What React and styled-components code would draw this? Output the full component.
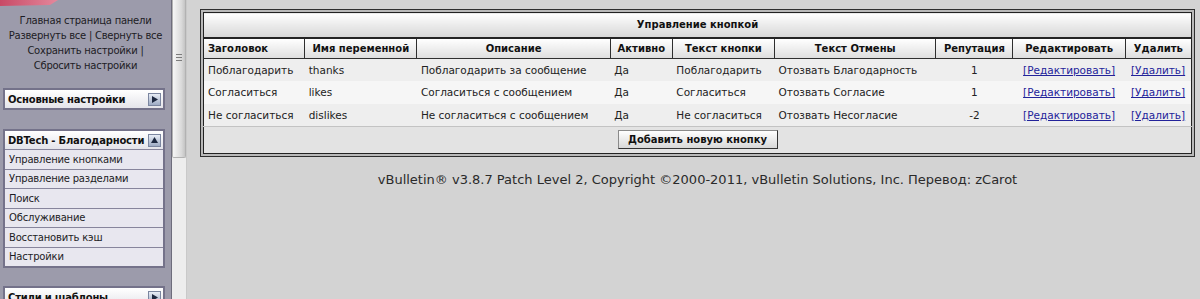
import React from 'react';
import styled, { createGlobalStyle } from 'styled-components';

const Global = createGlobalStyle`
  html, body { margin: 0; padding: 0; background: #d3d3d3; overflow: hidden; }
  body { font-family: "DejaVu Sans", Verdana, sans-serif; color: #1e1e1e; }
  * { box-sizing: border-box; }
`;

const Page = styled.div`
  display: flex;
  height: 299px;
  width: 1200px;
`;

const Nav = styled.nav`
  width: 172px;
  flex: none;
  background: #9c9bab;
  border-right: 1px solid #6e6d7c;
`;

const Logo = styled.div`
  height: 13px;
  svg { display: block; }
`;

const TopLinks = styled.div`
  text-align: center;
  font-size: 10px;
  letter-spacing: -0.25px;
  line-height: 15px;
  color: #1c1c24;
  margin-bottom: 15px;
`;

const Group = styled.div`
  margin: 0 6px ${p => p.$gap || 19}px 3px;
  border: 2px solid #74728a;
  background: #e8e7ef;
`;

const GroupHeader = styled.div`
  height: 18px;
  display: flex;
  align-items: center;
  justify-content: space-between;
  padding: 0 2px 0 3px;
  background: linear-gradient(#ffffff, #e4e4ea);
  font-weight: bold;
  font-size: 10px;
  letter-spacing: -0.2px;
  color: #111;
`;

const Toggle = styled.span`
  width: 13px;
  height: 13px;
  border: 1px solid #7b86a0;
  background: linear-gradient(#e8edf6, #9eabc4);
  display: flex;
  align-items: center;
  justify-content: center;
  svg { display: block; }
`;

const Item = styled.div`
  height: 19.5px;
  border-top: 1px solid #87859c;
  padding-left: 4px;
  font-size: 10px;
  letter-spacing: -0.2px;
  display: flex;
  align-items: center;
  color: #1c1c24;
`;

const Scrollbar = styled.div`
  width: 15px;
  flex: none;
  background: #ededed;
  border-right: 1px solid #c9c9c9;
`;

const Thumb = styled.div`
  height: 158px;
  background: linear-gradient(90deg, #f6f6f6, #dadada 70%, #c4c4c4);
  border: 1px solid #b2b2b2;
  border-top: none;
  border-radius: 0 0 2px 2px;
  display: flex;
  flex-direction: column;
  align-items: center;
  padding-top: 54px;
  gap: 2px;
`;

const Grip = styled.span`
  width: 6px;
  height: 1px;
  background: #7c7c7c;
`;

const Main = styled.main`
  flex: 1;
  padding: 9px 5px 0 13px;
  background: #d3d3d3;
`;

const Frame = styled.div`
  border: 1px solid #2e2e2e;
  padding: 2px;
  background: #b9b9b9;
`;

const Table = styled.table`
  width: 100%;
  border-collapse: collapse;
  table-layout: fixed;
  border: 1px solid #222;
  font-size: 10.5px;
`;

const TitleCell = styled.td`
  height: 25px;
  text-align: center;
  font-weight: bold;
  font-size: 10px;
  background: linear-gradient(#ffffff, #d6d6d6);
  border-bottom: 2px solid #232323;
  color: #111;
`;

const Th = styled.th`
  height: 21px;
  font-size: 10px;
  font-weight: bold;
  text-align: ${p => p.$left ? 'left' : 'center'};
  padding: 0 4px;
  background: linear-gradient(#ffffff, #dedede);
  border-right: 1px solid #2f2f2f;
  border-bottom: 1px solid #2f2f2f;
  color: #111;
  white-space: nowrap;
  &:last-child { border-right: none; }
`;

const Row = styled.tr`
  background: ${p => p.$alt ? '#f6f6f6' : '#eeeeee'};
`;

const Td = styled.td`
  height: 22.5px;
  padding: 0 4px;
  white-space: nowrap;
  text-align: ${p => p.$center ? 'center' : 'left'};
  color: #222;
`;

const Link = styled.a`
  color: #23239a;
  text-decoration: underline;
`;

const FootCell = styled.td`
  height: 27px;
  text-align: center;
  background: #e3e3e3;
  border-top: 1px solid #c3c3c3;
`;

const Button = styled.button`
  font-family: "DejaVu Sans", Verdana, sans-serif;
  font-weight: bold;
  font-size: 10px;
  width: 160px;
  height: 19px;
  padding: 0;
  color: #111;
  background: linear-gradient(#ffffff, #d8d8d8);
  border: 1px solid #8a8a8a;
  border-right-color: #333;
  border-bottom-color: #333;
`;

const Footer = styled.div`
  text-align: center;
  font-size: 13px;
  color: #2a2a2a;
  margin-top: 15px;
`;

const rows = [
  ['Поблагодарить', 'thanks', 'Поблагодарить за сообщение', 'Да', 'Поблагодарить', 'Отозвать Благодарность', '1'],
  ['Согласиться', 'likes', 'Согласиться с сообщением', 'Да', 'Согласиться', 'Отозвать Согласие', '1'],
  ['Не согласиться', 'dislikes', 'Не согласиться с сообщением', 'Да', 'Не согласиться', 'Отозвать Несогласие', '-2'],
];

const widths = [101, 112, 193, 62, 102, 161, 77, 112, 66];

const Arrow = ({ up }) => (
  <Toggle>
    <svg width="7" height="7" viewBox="0 0 7 7">
      {up ? <polygon points="0,6 7,6 3.5,0" fill="#1d2840" /> : <polygon points="1,0 1,7 7,3.5" fill="#1d2840" />}
    </svg>
  </Toggle>
);

export default function App() {
  return (
    <Page>
      <Global />
      <Nav>
        <Logo>
          <svg width="172" height="13" viewBox="0 0 172 13">
            <defs>
              <linearGradient id="lg" x1="0" x2="1">
                <stop offset="0" stopColor="#c84a66" />
                <stop offset="1" stopColor="#e4889c" />
              </linearGradient>
            </defs>
            <polygon points="0,0 58,0 50,5 0,6" fill="url(#lg)" />
          </svg>
        </Logo>
        <TopLinks>
          <div>Главная страница панели</div>
          <div>Развернуть все | Свернуть все</div>
          <div>Сохранить настройки |</div>
          <div>Сбросить настройки</div>
        </TopLinks>
        <Group>
          <GroupHeader>Основные настройки <Arrow /></GroupHeader>
        </Group>
        <Group $gap={18}>
          <GroupHeader>DBTech - Благодарности <Arrow up /></GroupHeader>
          <Item>Управление кнопками</Item>
          <Item>Управление разделами</Item>
          <Item>Поиск</Item>
          <Item>Обслуживание</Item>
          <Item>Восстановить кэш</Item>
          <Item>Настройки</Item>
        </Group>
        <Group>
          <GroupHeader>Стили и шаблоны <Arrow /></GroupHeader>
        </Group>
      </Nav>
      <Scrollbar>
        <Thumb><Grip /><Grip /><Grip /></Thumb>
      </Scrollbar>
      <Main>
        <Frame>
          <Table>
            <colgroup>
              {widths.map((w, i) => <col key={i} style={{ width: w }} />)}
            </colgroup>
            <tbody>
              <tr><TitleCell colSpan={9}>Управление кнопкой</TitleCell></tr>
              <tr>
                <Th $left>Заголовок</Th>
                <Th>Имя переменной</Th>
                <Th>Описание</Th>
                <Th>Активно</Th>
                <Th>Текст кнопки</Th>
                <Th>Текст Отмены</Th>
                <Th>Репутация</Th>
                <Th>Редактировать</Th>
                <Th>Удалить</Th>
              </tr>
              {rows.map((r, i) => (
                <Row key={i} $alt={i === 1}>
                  <Td>{r[0]}</Td>
                  <Td>{r[1]}</Td>
                  <Td>{r[2]}</Td>
                  <Td>{r[3]}</Td>
                  <Td>{r[4]}</Td>
                  <Td>{r[5]}</Td>
                  <Td $center>{r[6]}</Td>
                  <Td $center><Link href="#">[Редактировать]</Link></Td>
                  <Td $center><Link href="#">[Удалить]</Link></Td>
                </Row>
              ))}
              <tr>
                <FootCell colSpan={9}><Button>Добавить новую кнопку</Button></FootCell>
              </tr>
            </tbody>
          </Table>
        </Frame>
        <Footer>vBulletin® v3.8.7 Patch Level 2, Copyright ©2000-2011, vBulletin Solutions, Inc. Перевод: zCarot</Footer>
      </Main>
    </Page>
  );
}
